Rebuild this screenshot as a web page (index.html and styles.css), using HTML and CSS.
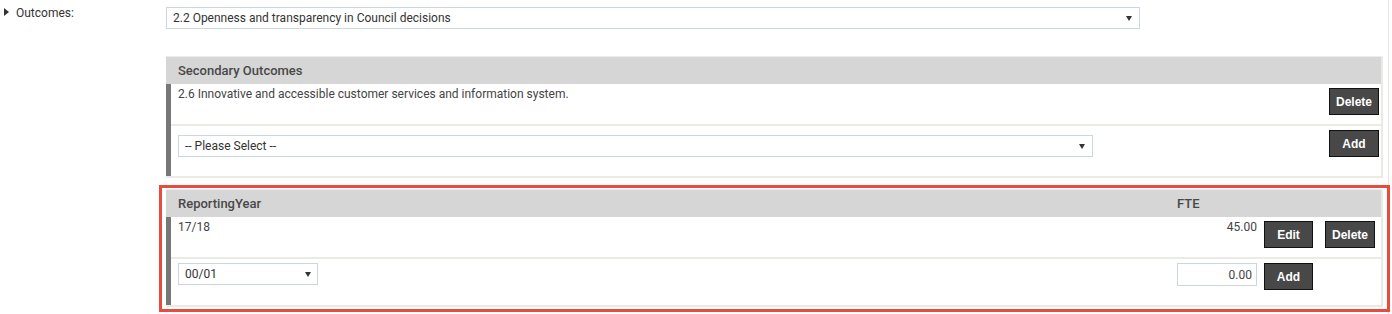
FILE: index.html
```html
<!DOCTYPE html>
<html lang="en">
<head>
  <meta charset="UTF-8">
  <title>Outcomes</title>
  <link rel="stylesheet" href="styles.css">
</head>
<body>
  <div class="page">
    <div class="field-row">
      <div class="field-label"><span class="caret"></span>Outcomes:</div>

      <div class="field-body">
        <!-- Primary outcome -->
        <div class="select-wrap primary">
          <select>
            <option>2.2 Openness and transparency in Council decisions</option>
          </select>
        </div>

        <!-- Secondary outcomes -->
        <div class="panel secondary">
          <div class="panel-head">Secondary Outcomes</div>
          <div class="panel-body">
            <div class="sec-row first">
              <div class="cell-text">2.6 Innovative and accessible customer services and information system.</div>
              <button class="btn">Delete</button>
            </div>
            <div class="sec-row second">
              <div class="select-wrap please">
                <select>
                  <option>-- Please Select --</option>
                </select>
              </div>
              <button class="btn">Add</button>
            </div>
          </div>
        </div>

        <!-- Reporting years -->
        <div class="highlight">
          <div class="panel years">
            <div class="panel-head year-grid">
              <span>ReportingYear</span>
              <span>FTE</span>
            </div>
            <div class="panel-body">
              <div class="year-grid year-row first">
                <span class="cell-text">17/18</span>
                <span class="cell-num">45.00</span>
                <button class="btn">Edit</button>
                <button class="btn">Delete</button>
              </div>
              <div class="year-grid year-row second">
                <div class="select-wrap year">
                  <select>
                    <option>00/01</option>
                  </select>
                </div>
                <input class="fte-input" type="text" value="0.00">
                <button class="btn">Add</button>
              </div>
            </div>
          </div>
        </div>
      </div>
    </div>
  </div>
</body>
</html>
```

FILE: styles.css
```css
body {
  margin: 0;
  padding: 0;
  font-family: Roboto, "Liberation Sans", Arial, sans-serif;
  font-size: 12px;
  color: #333;
  background: #fff;
}

.page {
  width: 1388px;
  height: 314px;
  border-right: 1px solid #e6e6e6;
}

.field-row {
  display: grid;
  grid-template-columns: 166px 1fr;
}

.field-label {
  padding: 6px 0 0 4px;
  line-height: 14px;
  color: #333;
  display: flex;
  align-items: center;
  align-self: start;
}

.caret {
  width: 0;
  height: 0;
  border-top: 4px solid transparent;
  border-bottom: 4px solid transparent;
  border-left: 5px solid #333;
  margin-right: 7px;
  margin-top: -2px;
}

.field-body {
  padding: 7px 5px 0 0;
}

/* selects with a small solid arrow */
.select-wrap {
  position: relative;
}

.select-wrap select {
  appearance: none;
  -webkit-appearance: none;
  width: 100%;
  height: 22px;
  padding: 0 6px;
  font-family: Roboto, "Liberation Sans", Arial, sans-serif;
  font-size: 12px;
  color: #333;
  background: #fff;
  border: 1px solid #ccd6df;
  border-radius: 0;
  box-sizing: border-box;
}

.select-wrap::after {
  content: "";
  position: absolute;
  right: 8px;
  top: 9px;
  border-left: 3px solid transparent;
  border-right: 3px solid transparent;
  border-top: 5px solid #333;
  pointer-events: none;
}

.select-wrap.primary {
  width: 974px;
}

.select-wrap.please {
  width: 915px;
  margin-top: 9px;
}

.select-wrap.year {
  width: 140px;
}

.select-wrap.year::after {
  right: 7px;
}

/* panels */
.panel {
  width: 1217px;
  box-sizing: border-box;
  border-top: 1px solid #ececec;
  border-right: 2px solid #ebebe5;
  border-bottom: 2px solid #ebebe5;
}

.panel.secondary {
  margin-top: 27px;
}

.panel-head {
  height: 27px;
  line-height: 28px;
  padding-left: 12px;
  background: #d6d6d6;
  color: #484848;
  font-size: 13px;
  font-weight: 500;
}

.panel-body {
  border-left: 5px solid #777;
}

.cell-text {
  padding-top: 3px;
  line-height: 14px;
  color: #444;
}

.btn {
  height: 27px;
  padding: 0;
  background: #484848;
  color: #fff;
  border: 1px solid #111;
  border-radius: 0;
  font-family: "Liberation Sans", Arial, sans-serif;
  font-size: 12px;
  font-weight: bold;
  cursor: pointer;
}

.btn:hover {
  background: #333;
}

.sec-row {
  display: flex;
  justify-content: space-between;
  align-items: flex-start;
  padding: 0 2px 0 7px;
}

.sec-row.first {
  height: 40px;
  border-bottom: 2px solid #ebebe5;
}

.sec-row.second {
  height: 50px;
}

.sec-row .btn {
  width: 50px;
  margin-top: 4px;
}

/* reporting year table */
.highlight {
  width: 1219px;
  margin: 7px 0 0 -7px;
  padding: 1px 2px 2px 4px;
  border: 3px solid #e84c3d;
}

.year-grid {
  display: grid;
  grid-template-columns: 1fr 80px 49px 55px;
  column-gap: 7px;
  padding-right: 6px;
}

.year-grid > :nth-child(4) {
  width: 50px;
  justify-self: end;
}

.panel-head.year-grid {
  padding-left: 12px;
}

.year-row {
  padding-left: 7px;
  align-items: start;
}

.year-row.first {
  height: 40px;
  border-bottom: 2px solid #ebebe5;
}

.year-row.second {
  height: 46px;
}

.year-row .btn,
.year-row .select-wrap,
.fte-input {
  margin-top: 4px;
}

.cell-num {
  padding-top: 3px;
  line-height: 14px;
  text-align: right;
  color: #444;
}

.fte-input {
  width: 80px;
  height: 23px;
  box-sizing: border-box;
  padding: 0 4px;
  text-align: right;
  font-family: Roboto, "Liberation Sans", Arial, sans-serif;
  font-size: 12px;
  color: #444;
  border: 1px solid #ccd6df;
  border-radius: 0;
}
```
